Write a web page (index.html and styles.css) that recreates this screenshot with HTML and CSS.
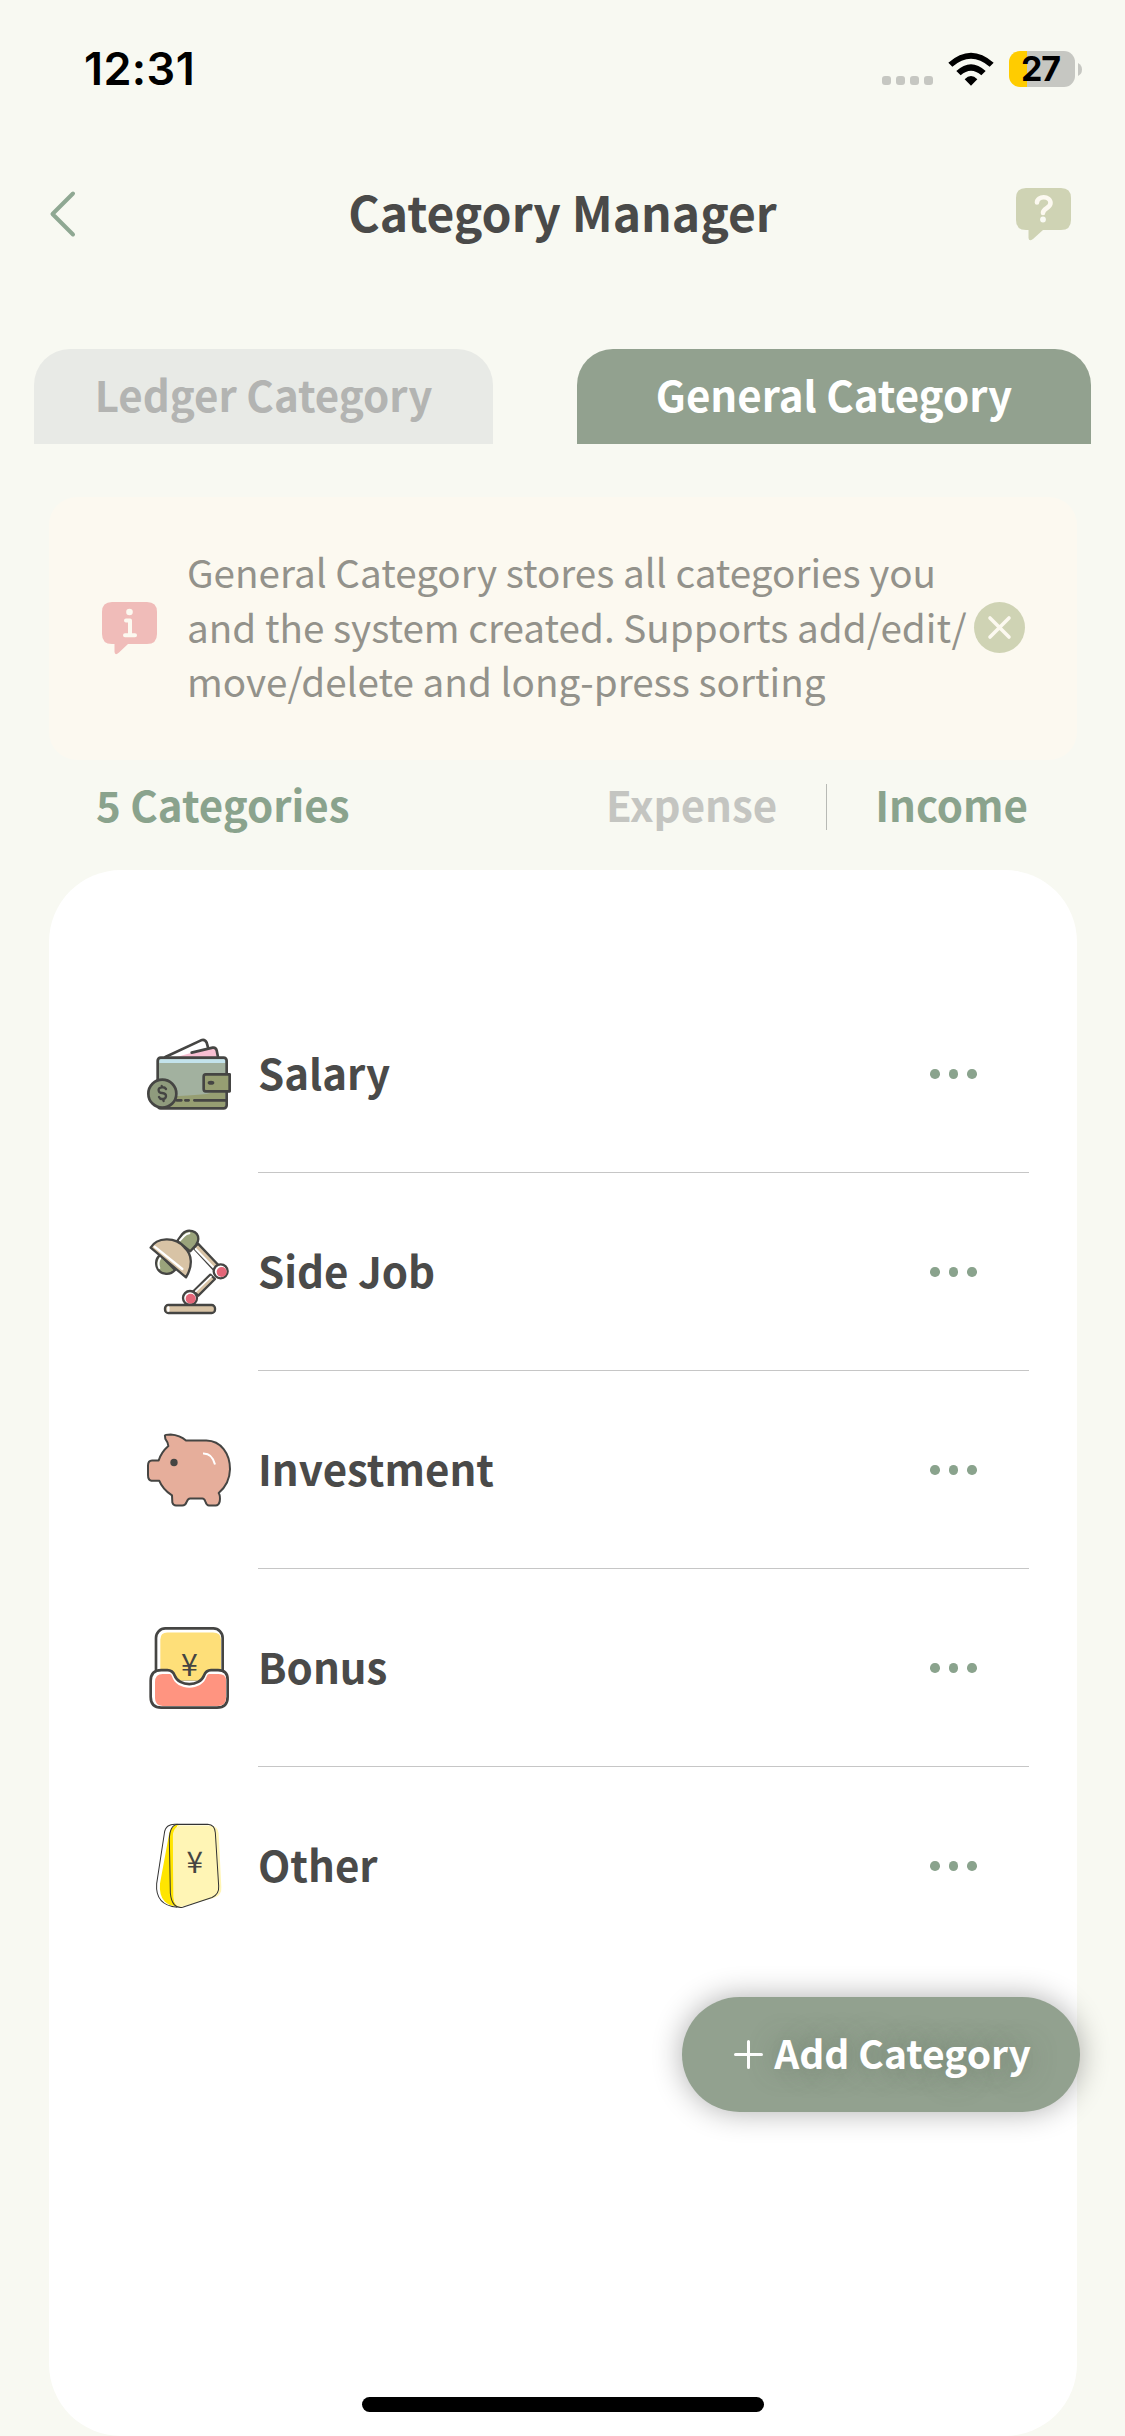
FILE: index.html
```html
<!DOCTYPE html>
<html lang="en">
<head>
<meta charset="utf-8">
<title>Category Manager</title>
<link rel="stylesheet" href="styles.css">
</head>
<body>
<header class="status">
  <span class="time">12:31</span>
  <div class="status-icons">
    <svg class="signal" width="51" height="9" viewBox="0 0 51 9"><rect width="9" height="9" rx="3"/><rect x="14" width="9" height="9" rx="3"/><rect x="28" width="9" height="9" rx="3"/><rect x="42" width="9" height="9" rx="3"/></svg>
    <svg class="wifi" width="46" height="34" viewBox="264 64 138 102"><path d="M265 96Q333 36 401 96L389 108Q333 60 277 108ZM289 121Q333 80 377 121L364 134Q333 107 302 134ZM314 146Q333 126 352 146L333 165Z"/></svg>
    <div class="battery"><span class="level">27</span></div>
    <svg class="cap" width="4" height="13" viewBox="0 0 4 13"><path d="M0 0Q4 2 4 6.500Q4 11 0 13Z"/></svg>
  </div>
</header>
<nav class="bar">
  <svg class="back" width="28" height="46" viewBox="0 0 28 46"><path d="M24 2.500L3.500 23L24 43.500"/></svg>
  <h1>Category Manager</h1>
  <svg class="help" width="55" height="52" viewBox="0 0 55 52"><path class="bubble" d="M10 0H45Q55 0 55 10V32Q55 42 45 42H27L17 51Q13 54 12.500 50V42H10Q0 42 0 32V10Q0 0 10 0Z"/><path class="mark" d="M21 14.500C21 7.500 34.500 7.500 34.500 15C34.500 20.500 27 20 27 25"/><circle cx="27" cy="31.500" r="2.900" fill="#f9faf3"/></svg>
</nav>
<div class="tabs">
  <div class="tab">Ledger Category</div>
  <div class="tab active">General Category</div>
</div>
<section class="notice">
  <svg class="info" width="55" height="52" viewBox="0 0 55 52"><path class="bubble" d="M10 0H45Q55 0 55 10V32Q55 42 45 42H26L17 50.500Q13 54 12.500 50V42H10Q0 42 0 32V10Q0 0 10 0Z"/><circle cx="27.500" cy="10" r="3.300" fill="#fcf9f0"/><path class="mark" d="M24 18.500H28V33M23 33.300H33"/></svg>
  <p>General Category stores all categories you<br>and the system created. Supports add/edit/<br>move/delete and long-press sorting</p>
  <svg class="close" width="51" height="51" viewBox="0 0 51 51"><circle cx="25.500" cy="25.500" r="25.500" fill="#cfd3b4"/><path d="M16 16L35 35M35 16L16 35" stroke="#fcf9f0" stroke-width="3.600" stroke-linecap="round"/></svg>
</section>
<div class="summary">
  <span class="count">5 Categories</span>
  <span class="expense">Expense</span>
  <i class="rule"></i>
  <span class="income">Income</span>
</div>
<main class="card">
  <div class="row">
    <svg class="icon" viewBox="45 30 264 264" stroke="#454543" stroke-width="8" stroke-linejoin="round" stroke-linecap="round">
      <path d="M106 111L213 61Q225 57 230 68L234 82" fill="#fff"/>
      <path d="M140 111L185 98L248 83Q257 81 260 91L264 111Z" fill="#f8bfd2" stroke="none"/><path d="M185 98L248 83Q257 81 260 91L264 111" fill="none"/>
      <rect x="83" y="113" width="207" height="152" rx="9" fill="#a2b19f" stroke="none"/>
      <path d="M88 118H286V129H88Z" fill="#c3e3ec" stroke="none"/>
      <path d="M88 229Q220 228 250 217H286V262H88Z" fill="#969e72" stroke="none"/>
      <rect x="83" y="113" width="207" height="152" rx="9" fill="none"/>
      <path d="M140 241H154M166 241H176M193 241H288" fill="none"/>
      <path d="M227 163H299V214H227Q221 214 221 207V170Q221 163 227 163Z" fill="#969e72"/>
      <ellipse cx="243" cy="188" rx="10" ry="6" fill="#454543" stroke="none"/>
      <circle cx="97" cy="221" r="42" fill="#8f9b7d"/>
      <path d="M108 207Q104 201 96 202Q84 203 86 212Q87 219 96 219Q109 221 108 229Q107 237 98 237Q90 238 87 231M95 198L97 202M99 238L101 243" fill="none" stroke-width="7"/>
    </svg>
    <span class="name">Salary</span>
    <span class="more"><i></i><i></i><i></i></span>
  </div>
  <div class="row">
    <svg class="icon" viewBox="45 624 264 264" stroke="#454543" stroke-width="7" stroke-linejoin="round" stroke-linecap="round">
      <path d="M191 684L204 671L265 735L252 750Z" fill="#d8c3a5"/><path d="M197 687L252 744" stroke="#fff" stroke-width="6"/>
      <path d="M241 764L255 777L205 827L190 814Z" fill="#d8c3a5"/><path d="M243 770L197 814" stroke="#fff" stroke-width="5"/>
      <path d="M142 663L157 642C173 624 205 632 205 657Q205 665 198 675L181 694Z" fill="#9aa37b"/><path d="M150 661L162 648Q169 641 178 640" fill="none" stroke="#fff" stroke-width="6"/>
      <path d="M91 705Q74 717 80 740C88 765 120 768 135 750Z" fill="#9aa37b"/><path d="M91 714Q82 728 88 744" fill="none" stroke="#fff" stroke-width="6"/>
      <path d="M62 683C80 652 135 648 163 682C188 704 188 739 168 772Z" fill="#d8c3a5"/><path d="M74 680L157 747" stroke="#fff" stroke-width="7"/>
      <circle cx="272" cy="754" r="21" fill="#fff"/><circle cx="275" cy="756" r="15" fill="#e46678" stroke="none"/>
      <circle cx="180" cy="834" r="21" fill="#fff"/><circle cx="182" cy="836" r="15" fill="#e46678" stroke="none"/>
      <rect x="105" y="855" width="150" height="24" rx="10" fill="#d8c3a5"/><path d="M115 862V872" stroke="#fff"/>
    </svg>
    <span class="name">Side Job</span>
    <span class="more"><i></i><i></i><i></i></span>
  </div>
  <div class="row">
    <svg class="icon" viewBox="45 77 264 260" preserveAspectRatio="none">
      <path d="M105 107Q102 102 122 102Q150 104 168 120H229C273 121 300 158 300 205Q299 248 266 275Q272 283 269 301Q266 312 257 312H237Q230 312 226 300Q223 291 217 291H180Q174 291 170 301Q166 312 157 312H138Q130 312 127 303L126 282Q98 264 88 239H64Q54 237 54 222V194Q54 179 66 179H86Q93 155 115 136Q114 125 106 115Z" fill="#e6ae9b" stroke="#454543" stroke-width="6" stroke-linejoin="round"/>
      <circle cx="132" cy="185" r="11" fill="#454543"/><path d="M219 158Q247 157 255 191" fill="none" stroke="#fff" stroke-width="6"/>
    </svg>
    <span class="name">Investment</span>
    <span class="more"><i></i><i></i><i></i></span>
  </div>
  <div class="row">
    <svg class="icon" viewBox="45 663 264 260" preserveAspectRatio="none">
      <rect x="78" y="676" width="200" height="150" rx="28" fill="#fff" stroke="#454543" stroke-width="8"/>
      <path d="M91 830V709Q91 688 112 688H249Q273 688 273 709V830Z" fill="#fedf79"/>
      <path d="M94 799H112Q128 799 134 815C146 849 210 849 222 815Q228 799 243 799H264Q293 799 293 827V878Q293 910 261 910H94Q62 910 62 878V831Q62 799 94 799Z" fill="#fff" stroke="#454543" stroke-width="8"/>
      <path d="M98 811H119Q124 811 126 818C140 862 216 862 230 818Q232 811 238 811H266Q288 811 288 830V882Q288 905 265 905H98Q75 905 75 882V835Q75 811 98 811Z" fill="#ff9480"/>
      <text class="yen" x="178" y="817" font-size="91">¥</text>
    </svg>
    <span class="name">Bonus</span>
    <span class="more"><i></i><i></i><i></i></span>
  </div>
  <div class="row">
    <svg class="icon" viewBox="45 1248 264 260" preserveAspectRatio="none">
      <path d="M141 1257Q119 1265 117 1285L90 1430Q87 1466 104 1483Q122 1499 142 1496Z" fill="#ffe500"/>
      <path d="M134 1258H241Q264 1259 266 1282L274 1440Q276 1464 253 1472L150 1500Q131 1500 130 1470L128 1288Q129 1266 147 1258Z" fill="#fff5b5"/>
      <path d="M148 1257Q129 1260 128 1288V1462Q129 1490 145 1499Q132 1500 123 1475V1285Q124 1260 140 1257Z" fill="#ffe500"/>
      <g fill="none" stroke="#333" stroke-width="3"><path d="M142 1255H233Q255 1257 256 1280L266 1437Q268 1461 246 1471L158 1500Q126 1505 121 1458L118 1300Q119 1258 142 1255Z"/><path d="M142 1255Q106 1251 103 1282L80 1430Q75 1494 142 1500"/></g>
      <text class="yen" x="194" y="1399" font-size="89">¥</text>
    </svg>
    <span class="name">Other</span>
    <span class="more"><i></i><i></i><i></i></span>
  </div>
</main>
<button class="add"><svg width="29" height="29" viewBox="0 0 29 29"><path d="M14.500 1.500V27.500M1.500 14.500H27.500"/></svg><span>Add Category</span></button>
<div class="home"></div>
</body>
</html>
```
FILE: styles.css
```css
* { box-sizing: border-box; }
body {
  margin: 0; width: 1125px; height: 2436px; position: relative; overflow: hidden;
  display: flex; flex-direction: column; background: #f8f9f2; color: #4a4a49;
  font-family: "Noto Sans CJK SC", "Noto Sans", sans-serif; font-weight: 700;
}
svg { display: block; flex: none; overflow: visible; fill: none; }
.signal, .cap { fill: #c6c7c2; }
.status { height: 138px; padding: 0 43px 0 84px; display: flex; justify-content: space-between; align-items: center; color: #000; font-family: Inter, sans-serif; font-weight: 600; }
.time { font-size: 45px; line-height: 60px; letter-spacing: 0.4px; }
.status-icons { display: flex; align-items: center; height: 36px; }
.signal { margin: 22px 15px 0 0; }
.wifi { fill: #000; margin: 0 15px 0 0; }
.battery { width: 66px; height: 36px; border-radius: 11px; background: linear-gradient(90deg, #ffcc00 18px, #c6c7c2 18px); text-align: center; }
.level { font-size: 34px; line-height: 36px; font-weight: 700; letter-spacing: -1px; margin-right: 3px; }
.cap { margin-left: 3px; }
.bar { height: 211px; padding: 0 54px 60px 49px; display: flex; align-items: center; justify-content: space-between; }
.back { stroke: #8fa893; stroke-width: 4; stroke-linecap: round; stroke-linejoin: round; }
h1 { margin: 0 0 6px 32px; font-size: 48px; line-height: 60px; white-space: nowrap; }
.help .bubble { fill: #cfd3b4; }
.mark { stroke: #fcf9f0; stroke-width: 4; stroke-linecap: round; stroke-linejoin: round; }
.help .mark { stroke-width: 4.600; }
.info .bubble { fill: #f0bcb9; }
.tabs { height: 95px; margin: 0 34px; display: flex; justify-content: space-between; text-align: center; font-size: 42px; line-height: 90px; }
.tab { width: 459px; border-radius: 36px 36px 0 0; background: #e8eae6; color: #b3b4b2; }
.tab.active { width: 514px; background: #92a18f; color: #fff; }
.notice { height: 263px; margin: 53px 48px 0 49px; padding: 0 52px 2px 53px; border-radius: 28px; background: #fcf9f0; display: flex; align-items: center; color: #93928b; font-weight: 400; }
.notice p { margin: 0 0 3px 30px; width: 787px; font-size: 38.650px; line-height: 54.500px; white-space: nowrap; }
.summary { height: 110px; padding: 0 97px 22px 96px; display: flex; align-items: center; font-size: 42px; line-height: 60px; color: #8aa38d; }
.count { margin-right: auto; }
.expense { color: #c4c5c1; }
.rule { width: 1px; height: 46px; background: #b8bab5; margin: 6px 48px 0 49px; }
.card { height: 1566px; margin: 0 48px 0 49px; padding: 105px 48px 0 96px; border-radius: 72px; background: #fff; }
.row { height: 198px; display: flex; align-items: center; position: relative; }
.row:not(:last-child)::after { content: ""; position: absolute; left: 113px; right: 0; bottom: 0; height: 1px; background: #c6c6c6; }
.icon { width: 88px; height: 88px; }
.name { margin-left: 25px; flex: 1; font-size: 42px; line-height: 60px; padding-bottom: 4px; }
.more { display: flex; gap: 9px; margin-right: 52px; }
.more i { width: 9.600px; height: 9.600px; border-radius: 50%; background: #8aa38d; }
.yen { text-anchor: middle; fill: #454543; font-family: "Noto Sans CJK SC", sans-serif; font-weight: 400; }
.add { position: absolute; left: 682px; top: 1997px; width: 398px; height: 115px; padding: 0 49px 0 52px; border: 0; border-radius: 58px; background: #92a18f; color: #fff; box-shadow: 0 0 30px rgba(0,0,0,.32); display: flex; align-items: center; justify-content: space-between; font: 700 39px/60px "Noto Sans CJK SC", sans-serif; white-space: nowrap; text-shadow: 0 0 30px rgba(70,90,70,.45); }
.add svg { stroke: #fff; stroke-width: 3; stroke-linecap: round; }
.add span { padding-bottom: 5px; }
.home { position: absolute; left: 362px; top: 2397px; width: 402px; height: 15px; border-radius: 8px; background: #000; }
```
